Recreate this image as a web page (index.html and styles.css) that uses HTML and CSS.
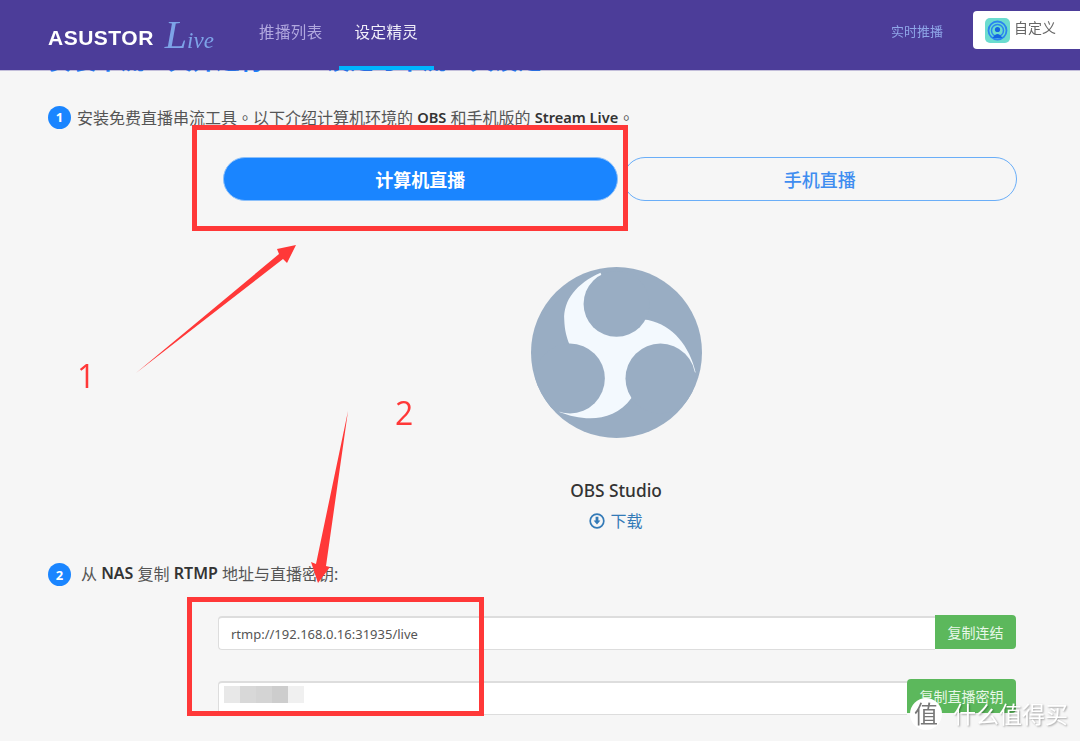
FILE: index.html
```html
<!DOCTYPE html>
<html lang="zh-CN">
<head>
    <meta charset="UTF-8">
    <meta name="viewport" content="width=device-width, initial-scale=1.0">
    <title>ASUSTOR Live</title>
    <link rel="stylesheet" href="styles.css">
</head>
<body>
    <header class="topbar">
        <div class="logo">
            <span class="logo-brand">ASUSTOR</span>
            <span class="logo-live">Live</span>
        </div>
        <nav class="nav">
            <a class="nav-item">推播列表</a>
            <a class="nav-item active">设定精灵</a>
        </nav>
        <a class="live-link">实时推播</a>
        <div class="channel">
            <svg class="channel-icon" viewBox="0 0 25 25">
                <rect width="25" height="25" rx="5" fill="#6bdccf"/>
                <circle cx="12.5" cy="12.5" r="9" fill="none" stroke="#2b84f0" stroke-width="1.8"/>
                <circle cx="12.5" cy="12.5" r="6" fill="none" stroke="#2b84f0" stroke-width="1.5"/>
                <circle cx="12.5" cy="11.5" r="2.6" fill="#1466e0"/>
                <path d="M7.5 20 Q12.5 12 17.5 20 Z" fill="#1466e0"/>
            </svg>
            <span class="channel-name">自定义</span>
        </div>
    </header>

    <main class="wizard">
        <h2 class="wizard-title">安装串流工具并进行 NAS 设定与串流工具设定</h2>

        <p class="step step-one"><span class="badge">1</span>安装免费直播串流工具<span class="dot">。</span>以下介绍计算机环境的 <b>OBS</b> 和手机版的 <b>Stream Live</b><span class="dot">。</span></p>

        <div class="tabs">
            <button class="tab tab-on">计算机直播</button>
            <button class="tab">手机直播</button>
        </div>

        <section class="app">
            <svg class="app-logo" viewBox="63 51 514 514">
                <clipPath id="disc"><circle cx="320" cy="308" r="257"/></clipPath>
                <circle cx="320" cy="308" r="257" fill="#99adc3"/>
                <path d="M272 68 C200 100 160 150 163 210 C164 240 170 262 178 282 L250 340 L148 487 C220 515 310 520 365 445 L400 330 L558 368 C540 290 490 225 415 210 L320 200 Z" fill="#f3f9fe"/>
                <g clip-path="url(#disc)" fill="#99adc3">
                    <circle cx="320" cy="162" r="99"/>
                    <circle cx="180" cy="386" r="105"/>
                    <circle cx="452" cy="386" r="105"/>
                </g>
            </svg>
            <div class="app-name">OBS Studio</div>
            <a class="download">
                <svg class="download-icon" viewBox="0 0 16 16">
                    <circle cx="8" cy="8" r="6.8" fill="none" stroke="#337ab7" stroke-width="1.7"/>
                    <path d="M6.6 3.8 H9.4 V7.6 H11.4 L8 11.6 L4.6 7.6 H6.6 Z" fill="#337ab7"/>
                </svg>
                下载
            </a>
        </section>

        <p class="step step-two"><span class="badge">2</span>从 <b>NAS</b> 复制 <b>RTMP</b> 地址与直播密钥:</p>

        <div class="copy-row">
            <input class="copy-input" type="text" value="rtmp://192.168.0.16:31935/live">
            <button class="copy-btn">复制连结</button>
        </div>
        <div class="copy-row copy-row-key">
            <input class="copy-input" type="text">
            <button class="copy-btn">复制直播密钥</button>
            <div class="mosaic"><i></i><i></i><i></i><i></i><i></i></div>
        </div>
    </main>

    <!-- annotations drawn on top of the screenshot -->
    <div class="mark mark-one"></div>
    <div class="mark mark-two"></div>
    <svg class="arrows" viewBox="0 0 1080 741">
        <polygon points="136,373 279,254 277,249 296,245 287,263 283,259" fill="#ff3838"/>
        <polygon points="348,411 326,566 330,567 318,583 311,562 316,564" fill="#ff3838"/>
    </svg>
    <span class="num num-one">1</span>
    <span class="num num-two">2</span>

    <div class="watermark">
        <span class="watermark-seal">值</span>
        <span>什么值得买</span>
    </div>
</body>
</html>
```

FILE: styles.css
```css
* {
    box-sizing: border-box;
}
body {
    margin: 0;
    height: 741px;
    overflow: hidden;
    background-color: #f6f6f6;
    font-family: "Noto Sans", "Noto Sans CJK SC", sans-serif;
    font-size: 15px;
    color: #555;
}
.topbar {
    position: fixed;
    top: 0;
    left: 0;
    right: 0;
    height: 70px;
    z-index: 2;
    display: flex;
    align-items: center;
    padding-left: 48px;
    background-color: #4c3d99;
    box-shadow: 0 1px 0 rgba(76, 61, 153, 0.3);
}
.logo {
    display: flex;
    align-items: center;
    width: 195px;
}
.logo-brand {
    margin-top: 6px;
    font-family: "Liberation Sans", sans-serif;
    font-size: 21px;
    font-weight: bold;
    letter-spacing: 0.5px;
    color: #fff;
}
.logo-live {
    display: inline-block;
    margin-left: 11px;
    margin-top: -1px;
    font-family: "Liberation Serif", serif;
    font-size: 23px;
    font-style: italic;
    color: #7da3e8;
}
.logo-live::first-letter {
    font-size: 40px;
}
.nav {
    display: flex;
    height: 70px;
}
.nav-item {
    display: flex;
    align-items: center;
    padding: 0 16px 8px;
    font-size: 15.5px;
    letter-spacing: 0.4px;
    color: #b1a8df;
}
.nav-item.active {
    color: #f2f0fa;
    border-bottom: 4px solid #00b4ff;
    padding-bottom: 4px;
}
.live-link {
    margin-left: auto;
    margin-right: 30px;
    padding-bottom: 10px;
    font-size: 13px;
    color: #8fa6e8;
}
.channel {
    display: flex;
    align-items: center;
    gap: 4px;
    width: 107px;
    height: 38px;
    margin-bottom: 10px;
    padding-left: 12px;
    padding-bottom: 3px;
    background: #fff;
    border-radius: 4px 0 0 4px;
    font-size: 14px;
    color: #666;
}
.channel-icon {
    width: 25px;
    height: 25px;
    margin-top: 3px;
}
.channel-name {
    margin-bottom: 4px;
}
.wizard {
    padding: 45px 63px 0 48px;
}
.wizard-title {
    margin: 0;
    font-size: 24px;
    line-height: 30px;
    font-weight: 700;
    color: #1a85ff;
    white-space: nowrap;
}
.step {
    display: flex;
    align-items: center;
    white-space: pre-wrap;
    margin: 0;
    height: 24px;
    font-size: 16px;
}
.step b {
    font-weight: 600;
    color: #333;
}
.dot {
    font-family: "Noto Sans CJK TC", sans-serif;
}
.step-one {
    margin-top: 30px;
}
.step-one b {
    font-size: 14.6px;
}
.step-two {
    margin-top: 0;
}
.badge {
    flex: none;
    display: flex;
    align-items: center;
    justify-content: center;
    width: 23px;
    height: 23px;
    margin-right: 6px;
    border-radius: 50%;
    background-color: #1a85ff;
    color: #fff;
    font-size: 13px;
    font-weight: 700;
}
.step-two .badge {
    margin-top: 3px;
    margin-right: 10px;
}
.tabs {
    display: grid;
    grid-template-columns: 1fr 1fr;
    gap: 5px;
    height: 44px;
    margin: 28px 0 0 175px;
}
.tab {
    border: 1px solid #6aaef8;
    border-radius: 22px;
    background: transparent;
    font-family: inherit;
    font-size: 18px;
    font-weight: 500;
    color: #3f8df0;
}
.tab-on {
    border-color: #8cc0fa;
    background-color: #1a85ff;
    font-weight: 700;
    color: #fff;
}
.app {
    display: flex;
    flex-direction: column;
    align-items: center;
    padding-left: 167px;
    margin-top: 66px;
    height: 294px;
}
.app-logo {
    width: 171px;
    height: 171px;
}
.app-name {
    margin-top: 41px;
    font-size: 17.3px;
    line-height: 24px;
    font-weight: 500;
    color: #333;
}
.download {
    display: flex;
    align-items: center;
    gap: 5px;
    margin-top: 7px;
    font-size: 16px;
    line-height: 22px;
    color: #337ab7;
}
.download-icon {
    width: 16px;
    height: 16px;
}
.copy-row {
    position: relative;
    display: flex;
    height: 34px;
    margin: 30px 1px 0 170px;
}
.copy-row-key {
    margin-top: 31px;
}
.copy-input {
    flex: 1;
    min-width: 0;
    height: 34px;
    margin-top: 1px;
    padding: 0 12px;
    border: 1px solid #ddd;
    border-top-width: 2px;
    border-right: none;
    border-radius: 4px 0 0 4px;
    background: #fff;
    font-family: inherit;
    font-size: 13px;
    color: #555;
    outline: none;
}
.copy-btn {
    height: 34px;
    padding: 0 12.5px;
    border: none;
    border-radius: 0 4px 4px 0;
    background-color: #5cb85c;
    font-family: inherit;
    font-size: 14px;
    color: #e8f7e8;
}
.copy-row-key .copy-btn {
    border-radius: 4px 4px 4px 0;
    margin-top: -1px;
}
.mosaic {
    position: absolute;
    left: 6px;
    top: 6px;
    display: flex;
    height: 17px;
}
.mosaic i {
    width: 16px;
    background-color: #d8d8d8;
}
.mosaic i:nth-child(1) {
    background-color: #e8e8e8;
}
.mosaic i:nth-child(3) {
    background-color: #d4d4d4;
}
.mosaic i:nth-child(4) {
    background-color: #cdcdcd;
}
.mosaic i:nth-child(5) {
    background-color: #f0f0f0;
}
.mark {
    position: absolute;
    z-index: 3;
    border: 5px solid #ff3838;
}
.mark-one {
    left: 192px;
    top: 125px;
    width: 436px;
    height: 106px;
}
.mark-two {
    left: 187px;
    top: 597px;
    width: 297px;
    height: 119px;
}
.arrows {
    position: absolute;
    left: 0;
    top: 0;
    z-index: 3;
    width: 1080px;
    height: 741px;
}
.num {
    position: absolute;
    z-index: 3;
    font-family: "Open Sans", sans-serif;
    font-size: 32px;
    line-height: 40px;
    color: #ff3838;
}
.num-one {
    left: 77px;
    top: 356px;
}
.num-two {
    left: 395px;
    top: 393px;
}
.watermark {
    position: absolute;
    z-index: 4;
    left: 910px;
    top: 698px;
    display: flex;
    align-items: center;
    gap: 11px;
    font-size: 23px;
    line-height: 32px;
    color: #fff;
    text-shadow: 1px 1px 2px rgba(0, 0, 0, 0.35);
}
.watermark-seal {
    display: flex;
    align-items: center;
    justify-content: center;
    width: 32px;
    height: 32px;
    border-radius: 50%;
    background: #fff;
    color: #777;
    font-size: 24px;
    text-shadow: none;
}
```
